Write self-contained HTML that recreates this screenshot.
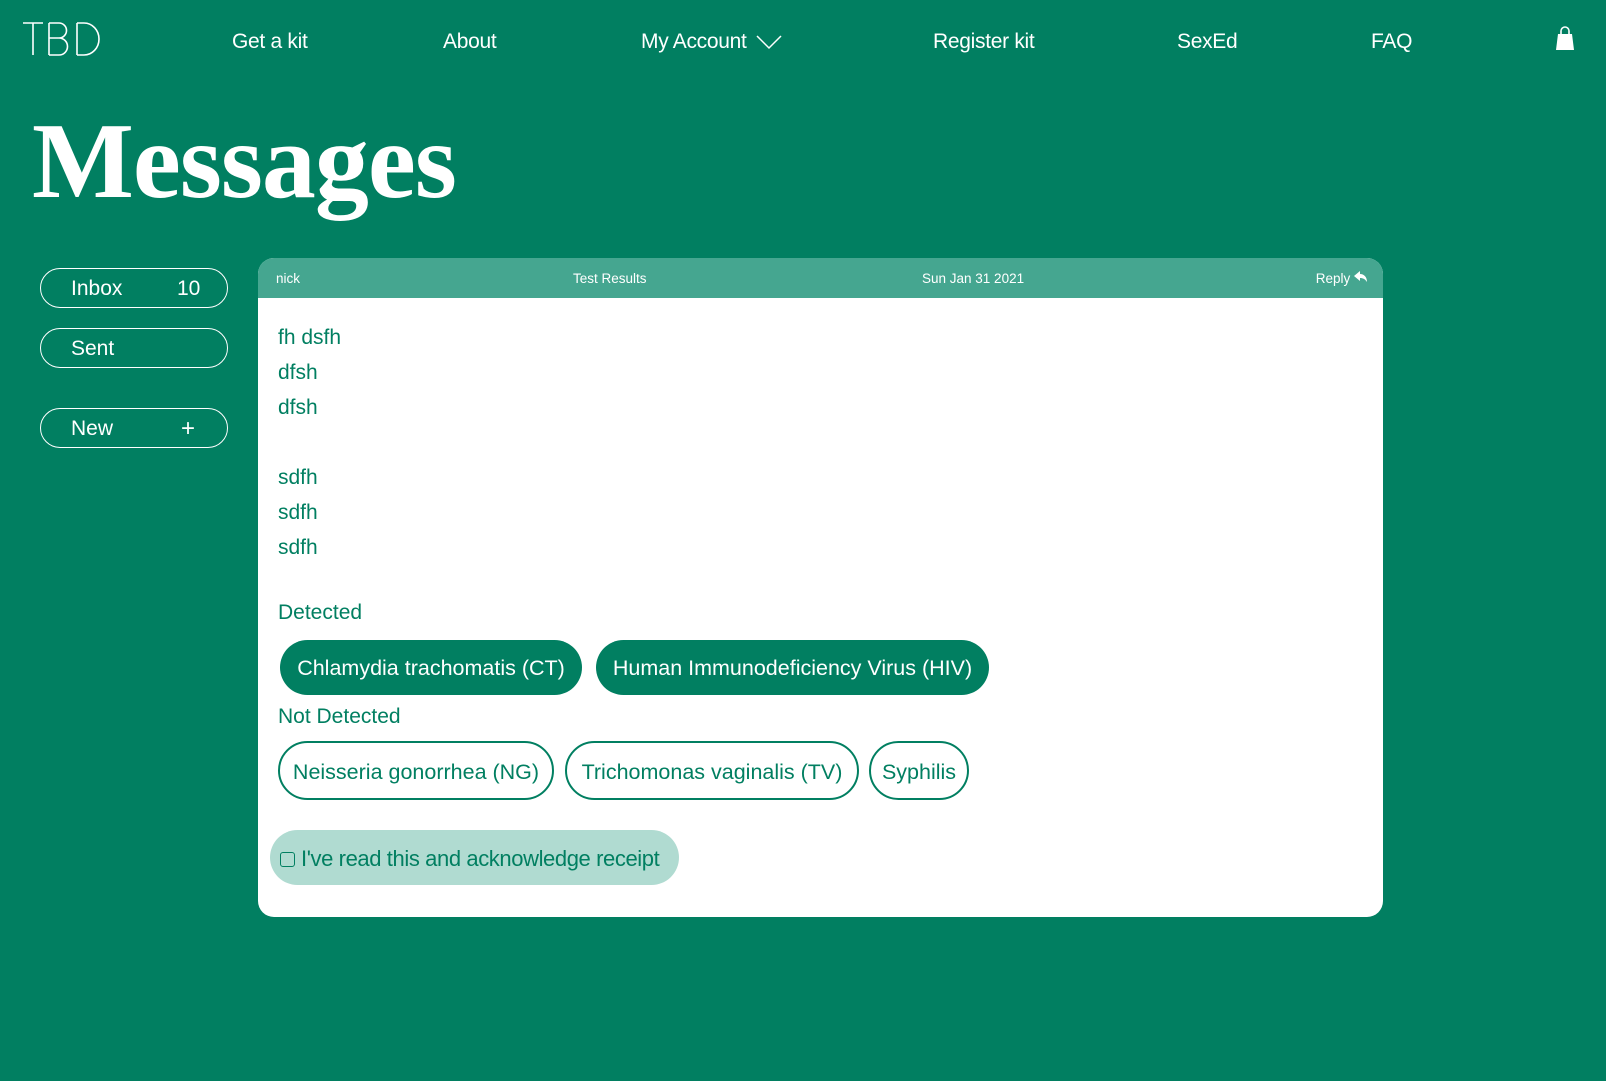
<!DOCTYPE html>
<html><head><meta charset="utf-8"><style>
*{margin:0;padding:0;box-sizing:border-box}
body{width:1606px;height:1081px;background:#017f61;font-family:"Liberation Sans",sans-serif;color:#fff;position:relative;overflow:hidden}
.a{position:absolute;white-space:nowrap}
.nav{font-size:21px;top:30px;letter-spacing:-0.3px}
h1{position:absolute;left:32px;top:100px;font-family:"Liberation Serif",serif;font-size:108px;font-weight:bold;letter-spacing:-1px}
.btn{position:absolute;left:40px;width:188px;height:40px;border:1.5px solid #fff;border-radius:20px;font-size:21px;line-height:39px;padding-left:30px}
.card{position:absolute;left:258px;top:258px;width:1125px;height:659px;background:#fff;border-radius:16px;overflow:hidden;color:#017f61}
.hd{height:40px;background:#45a690;color:#fff;font-size:13.5px;position:relative}
.hd span{position:absolute;top:13px}
.t{position:absolute;left:20px;font-size:21px;margin-top:2px}
.pill{position:absolute;height:55px;border-radius:28px;font-size:21.5px;line-height:57px;padding:0 10px;text-align:center}
.f{background:#017f61;color:#fff}
.o{border:2px solid #017f61;line-height:58px;height:59px;border-radius:30px}
</style></head><body>
<svg class="a" style="left:23px;top:22px" width="78" height="34" viewBox="0 0 78 34" fill="none" stroke="#fff" stroke-width="1.6"><path d="M0 1 H20 M10 1 V33"/><path d="M26 1 V33 M26 1 H36 a7.5 7.5 0 0 1 0 15 H26 M36 16 a8.5 8.5 0 0 1 0 17 H26"/><path d="M54 1 V33 M54 1 H61 a15 16 0 0 1 0 32 H54"/></svg>
<div class="a nav" style="left:232px">Get a kit</div>
<div class="a nav" style="left:443px">About</div>
<div class="a nav" style="left:641px">My Account <svg width="26" height="16" viewBox="0 0 26 16" style="vertical-align:middle;margin-left:4px"><path d="M1 2 L13 14 L25 2" stroke="#fff" stroke-width="1.5" fill="none"/></svg></div>
<div class="a nav" style="left:933px">Register kit</div>
<div class="a nav" style="left:1177px">SexEd</div>
<div class="a nav" style="left:1371px">FAQ</div>
<svg class="a" style="left:1555px;top:25px" width="20" height="26" viewBox="0 0 20 26"><path d="M6 10 V6 a4 4 0 0 1 8 0 V10" stroke="#fff" stroke-width="1.6" fill="none"/><path d="M3 9 H17 L19 25 H1 Z" fill="#fff"/></svg>
<h1>Messages</h1>
<div class="btn" style="top:268px">Inbox<span style="position:absolute;left:136px">10</span></div>
<div class="btn" style="top:328px">Sent</div>
<div class="btn" style="top:408px">New<span style="position:absolute;left:140px;font-size:24px">+</span></div>
<div class="card">
<div class="hd"><span style="left:18px">nick</span><span style="left:315px">Test Results</span><span style="left:664px">Sun Jan 31 2021</span><span style="right:15px">Reply <svg width="14" height="12" viewBox="0 0 14 12"><path d="M6 0 L0 5 L6 10 V7 C9 7 11 8 13 11 C13 6 10 3 6 3 Z" fill="#fff"/></svg></span></div>
<div class="t" style="top:66px">fh dsfh</div>
<div class="t" style="top:101px">dfsh</div>
<div class="t" style="top:136px">dfsh</div>
<div class="t" style="top:206px">sdfh</div>
<div class="t" style="top:241px">sdfh</div>
<div class="t" style="top:276px">sdfh</div>
<div class="t" style="top:341px">Detected</div>
<div class="pill f" style="left:22px;top:382px;width:302px">Chlamydia trachomatis (CT)</div>
<div class="pill f" style="left:338px;top:382px;width:393px">Human Immunodeficiency Virus (HIV)</div>
<div class="t" style="top:445px">Not Detected</div>
<div class="pill o" style="left:20px;top:483px;width:276px">Neisseria gonorrhea (NG)</div>
<div class="pill o" style="left:307px;top:483px;width:294px">Trichomonas vaginalis (TV)</div>
<div class="pill o" style="left:611px;top:483px;width:100px">Syphilis</div>
<div class="pill" style="left:12px;top:572px;width:409px;background:#b0dbd1;font-size:22px;letter-spacing:-0.4px;text-align:left;padding-left:10px;color:#017f61"><span style="display:inline-block;width:15px;height:15px;border:1.5px solid #017f61;border-radius:3px;vertical-align:-1px;margin-right:6px"></span>I've read this and acknowledge receipt</div>
</div>
</body></html>
